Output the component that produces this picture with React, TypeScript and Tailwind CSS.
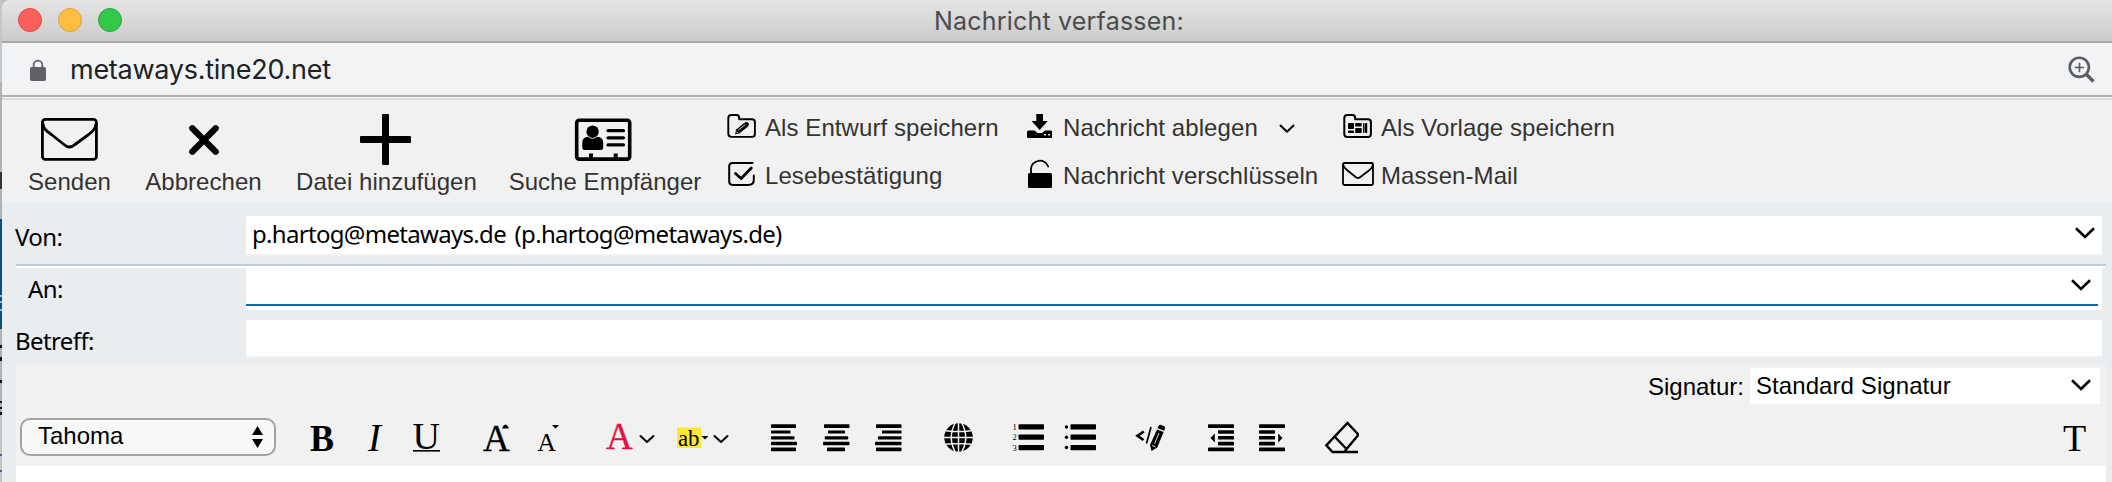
import React from "react";

type ArtProps = { x: number; y: number; w: number; h: number; children: React.ReactNode };

/* Every drawing uses window coordinates inside its own cell. */
function Art({ x, y, w, h, children }: ArtProps) {
  return (
    <svg width={w} height={h} viewBox={`${x} ${y} ${w} ${h}`} className="block shrink-0" aria-hidden="true">
      {children}
    </svg>
  );
}

const stroke = { fill: "none", stroke: "#000", strokeLinecap: "round", strokeLinejoin: "round" } as const;

function Bars({ rows }: { rows: number[][] }) {
  return (
    <>
      {rows.map(([x, y, w, h]) => (
        <rect key={`${x}-${y}`} x={x} y={y} width={w} height={h} rx={0.7} />
      ))}
    </>
  );
}

function BigButton({ label, className, children }: { label: string; className: string; children: React.ReactNode }) {
  return (
    <div className={`flex shrink-0 flex-col items-center ${className}`}>
      {children}
      <span className="mr-px text-[24px] leading-[28px] tracking-[0.04px] whitespace-nowrap">{label}</span>
    </div>
  );
}

function SmallButton({ label, children, after }: { label: string; children: React.ReactNode; after?: React.ReactNode }) {
  return (
    <div className="flex h-12 items-center">
      {children}
      <span className="text-[24px] leading-[28px] tracking-[0.08px] whitespace-nowrap">{label}</span>
      {after}
    </div>
  );
}

function Chevron({ className }: { className: string }) {
  return (
    <svg width="20" height="12" viewBox="0 0 20 12" className={`block shrink-0 ${className}`}>
      <path d="M1 1.3L10 10L19 1.3" fill="none" stroke="#000" strokeWidth="2.6" />
    </svg>
  );
}

const edge: [string, string][] = [
  ["h-[82px]", "bg-[#c3c7cb]"],
  ["h-[91px]", "bg-[#b2b2b2]"],
  ["h-[17px]", "bg-[#333333]"],
  ["h-[30px]", "bg-[#b2b2b2]"],
  ["h-[76px]", "bg-[#064f8c]"],
  ["h-[2px]", "bg-[#9db9d0]"],
  ["h-[4px]", "bg-[#064f8c]"],
  ["h-[2px]", "bg-[#9db9d0]"],
  ["h-[6px]", "bg-[#064f8c]"],
  ["h-[2px]", "bg-[#9db9d0]"],
  ["h-[18px]", "bg-[#064f8c]"],
  ["h-[16px]", "bg-[#b2b2b2]"],
  ["h-[3px]", "bg-[#111111]"],
  ["h-[10px]", "bg-[#b2b2b2]"],
  ["h-[4px]", "bg-[#111111]"],
  ["h-[19px]", "bg-[#b2b2b2]"],
  ["h-[3px]", "bg-[#111111]"],
  ["h-[18px]", "bg-[#b2b2b2]"],
  ["h-[2px]", "bg-[#111111]"],
  ["h-[4px]", "bg-[#b2b2b2]"],
  ["h-[2px]", "bg-[#111111]"],
  ["h-[3px]", "bg-[#b2b2b2]"],
  ["h-[3px]", "bg-[#111111]"],
  ["h-[39px]", "bg-[#c4c4c4]"],
  ["h-[2px]", "bg-[#3f6493]"],
  ["h-[14px]", "bg-[#c4c4c4]"],
  ["h-[2px]", "bg-[#3f6493]"],
  ["h-[10px]", "bg-[#c4c4c4]"],
];

function TitleBar() {
  return (
    <div className="flex h-[43px] items-start rounded-tl-[7px] border-b-2 border-[#a8a8a8] bg-linear-to-b from-[#e5e5e5] to-[#cbcbcb]">
      <div className="flex w-[932px] gap-4 pt-2 pl-4">
        <span className="size-6 rounded-full border border-[#e2463f] bg-[#fc605b]" />
        <span className="size-6 rounded-full border border-[#dfa033] bg-[#fdbe41]" />
        <span className="size-6 rounded-full border border-[#27aa35] bg-[#34c84a]" />
      </div>
      <span className="font-[Inter,sans-serif] text-[25px] leading-[42px] tracking-[0.2px] whitespace-nowrap text-[#4c4c4c]">
        Nachricht verfassen:
      </span>
    </div>
  );
}

function AddressBar() {
  return (
    <div className="flex h-[57px] flex-col">
      <div className="flex h-[52px] items-center justify-between bg-[#f1f3f5]">
        <div className="flex items-center">
          <Art x={2} y={43} w={68} h={52}>
            <rect x="30" y="67" width="16" height="14" rx="1.8" fill="#5f6164" />
            <path d="M33.7 68V65a4.3 4.3 0 0 1 8.6 0V68" fill="none" stroke="#5f6164" strokeWidth="1.8" />
          </Art>
          <span className="pt-[2px] font-[Inter,sans-serif] text-[27px] leading-[50px] tracking-[-0.26px] whitespace-nowrap text-[#202124]">
            metaways.tine20.net
          </span>
        </div>
        <Art x={2060} y={43} w={52} h={52}>
          <circle cx="2079.3" cy="67.3" r="9.6" fill="none" stroke="#5a5c5f" strokeWidth="2.6" />
          <path d="M2086.5 74.5L2093.5 81.5" stroke="#5a5c5f" strokeWidth="3.4" />
          <path d="M2074.8 67.5H2084.2M2079.5 62.8V72.2" stroke="#5a5c5f" strokeWidth="1.7" />
        </Art>
      </div>
      <div className="h-[2px] bg-[#b0b2b4]" />
      <div className="h-px bg-[#f3f3f5]" />
      <div className="h-[2px] bg-[#dadbe0]" />
    </div>
  );
}

function ActionBar() {
  return (
    <div className="flex h-[102px] bg-[#f1f1f1] pl-[20px] text-[#333333]">
      <BigButton label="Senden" className="w-[96px]">
        <Art x={22} y={100} w={96} h={68}>
          <g {...stroke} strokeWidth="2.8">
            <rect x="42.4" y="119.4" width="54" height="40" rx="3" />
            <path d="M43 124C43.5 129 47 131.5 52 135L64 144.5Q69.4 149.5 75 144.5L88 135C92.500 131.500 95.500 129 96 124" />
          </g>
        </Art>
      </BigButton>
      <BigButton label="Abbrechen" className="w-[172px]">
        <Art x={118} y={100} w={172} h={68}>
          <path d="M192.300 128.300L215.700 151.700M215.700 128.300L192.300 151.700" {...stroke} strokeWidth="6.200" />
        </Art>
      </BigButton>
      <BigButton label="Datei hinzufügen" className="w-[194px]">
        <Art x={290} y={100} w={194} h={68}>
          <rect x="382" y="114" width="7" height="51" rx="1" />
          <rect x="360" y="136" width="51" height="7" rx="1" />
        </Art>
      </BigButton>
      <BigButton label="Suche Empfänger" className="w-[243px]">
        <Art x={484} y={100} w={243} h={68}>
          <rect x="576.700" y="120.300" width="53" height="38.800" rx="2.500" {...stroke} strokeWidth="3.600" />
          <circle cx="592.600" cy="131.700" r="6.200" />
          <path d="M582.300 148V143Q582.300 137 588 136.800Q592.600 140.500 597.200 136.800Q603.200 137 603.200 143V148Q603 150 601 150H584.500Q582.500 150 582.300 148Z" />
          <path d="M608 130.700H623.500M608 137.800H623.500M608 144.900H623.500" {...stroke} strokeWidth="3.200" />
          <rect x="589" y="153.500" width="4" height="5" />
          <rect x="613.700" y="153.500" width="4" height="5" />
        </Art>
      </BigButton>
      <div className="flex w-[297px] shrink-0 flex-col pt-1">
        <SmallButton label="Als Entwurf speichern">
          <Art x={727} y={104} w={38} h={48}>
            <path d="M728.300 133.500V118Q728.300 115 731.300 115H736.500Q739.200 115 739.200 118V119.300H752Q754.900 119.300 754.900 122V134Q754.900 136.900 752 136.900H731.500Q728.300 136.900 728.300 133.500Z" {...stroke} strokeWidth="1.900" />
            <path d="M735 134.500L736.200 129.500L744.500 122.800Q747.300 121 748.800 123.500Q749.500 125.300 747.800 126.800L739.500 133.300Z" />
            <path d="M738.300 130.200L745.200 124.600M736.500 131.600L737.800 133" stroke="#f1f1f1" strokeWidth="0.900" />
          </Art>
        </SmallButton>
        <SmallButton label="Lesebestätigung">
          <Art x={727} y={152} w={38} h={48}>
            <path d="M752.500 162.900H732.500Q729.200 162.900 729.200 166.200V181.500Q729.200 184.900 732.500 184.900H748Q753.800 184.900 753.800 180V175.500" {...stroke} strokeWidth="2" />
            <path d="M735.500 173.500L741.200 178.500L751.300 168" {...stroke} strokeWidth="2.800" />
          </Art>
        </SmallButton>
      </div>
      <div className="flex w-[318px] shrink-0 flex-col pt-1">
        <SmallButton
          label="Nachricht ablegen"
          after={
            <svg width="16" height="10" viewBox="0 0 16 10" className="mt-0.5 ml-[21px] block">
              <path d="M1.500 1.500L8 7.800L14.500 1.500" {...stroke} strokeWidth="2" />
            </svg>
          }
        >
          <Art x={1024} y={104} w={39} h={48}>
            <path d="M1036.300 114H1043V121H1047.800L1039.700 130L1031.600 121H1036.300Z" />
            <path d="M1028.500 130.500H1034.500L1037.500 133H1042L1045 130.500H1051Q1052 130.500 1052 132V137Q1052 138 1051 138H1028Q1027 138 1027 137V132Q1027 130.500 1028.500 130.500Z" />
            <path d="M1044.200 134.700H1046M1048.200 134.700H1050" stroke="#f1f1f1" strokeWidth="1.600" />
          </Art>
        </SmallButton>
        <SmallButton label="Nachricht verschlüsseln">
          <Art x={1024} y={152} w={39} h={48}>
            <rect x="1028" y="173" width="24" height="15" rx="1.500" />
            <path d="M1031 174V168.500A8.800 8.200 0 0 1 1048.200 166.500" {...stroke} strokeWidth="1.800" />
          </Art>
        </SmallButton>
      </div>
      <div className="flex shrink-0 flex-col pt-1">
        <SmallButton label="Als Vorlage speichern">
          <Art x={1342} y={104} w={39} h={48}>
            <path d="M1344.300 134V118Q1344.300 115 1347.300 115H1352.500Q1355.200 115 1355.200 118V119.300H1368Q1370.900 119.300 1370.900 122V134Q1370.900 136.900 1368 136.900H1347.300Q1344.300 136.900 1344.300 134Z" {...stroke} strokeWidth="2" />
            <Bars rows={[[1348, 123, 6, 6], [1355.2, 123, 6.5, 3.500], [1348, 130.500, 6, 2.500], [1355.2, 128, 6.500, 5], [1363, 123, 1.500, 10], [1365, 123, 2.200, 10]]} />
          </Art>
        </SmallButton>
        <SmallButton label="Massen-Mail">
          <Art x={1342} y={152} w={39} h={48}>
            <g {...stroke} strokeWidth="1.800">
              <rect x="1343" y="163" width="30" height="22" rx="1.500" />
              <path d="M1343.300 165Q1344 168 1347 170L1355 176.500Q1358 179.500 1361 176.500L1369.500 170Q1372.500 168 1372.800 165" />
            </g>
          </Art>
        </SmallButton>
      </div>
    </div>
  );
}

const label = "shrink-0 font-['Noto_Sans',sans-serif] text-[24px] leading-[32px] tracking-[-0.6px] whitespace-nowrap";

function AddressForm() {
  return (
    <div className="flex h-[162px] flex-col bg-[#e9edf0] pl-[14px] text-black">
      <div className="flex h-[62px] items-start pt-[14px] pr-[10px]">
        <label className={`${label} -ml-px w-[231px] pt-[5px]`}>Von:</label>
        <div className="flex h-[40px] flex-1 items-start justify-between border-b-2 border-[#f0f1f2] bg-white pr-[7px] pl-[6px]">
          <span className="pt-[2px] font-['Noto_Sans',sans-serif] text-[24px] leading-[32px] tracking-[-0.69px] whitespace-nowrap [word-spacing:3px]">
            p.hartog@metaways.de (p.hartog@metaways.de)
          </span>
          <Chevron className="mt-[11px]" />
        </div>
      </div>
      <div className="mr-[6px] h-[2px] bg-[#c0cdd9]" />
      <div className="mr-[7px] ml-px flex h-[44px] border-t-2 border-white pr-[3px]">
        <label className={`${label} w-[229px] border-l-2 border-[#eceeef] pt-[5px] pl-[9px]`}>An:</label>
        <div className="flex h-[42px] flex-1 flex-col bg-white">
          <div className="mr-1 flex h-[38px] justify-end border-b-2 border-[#0f68a6] pr-[7px]">
            <Chevron className="mt-[11px]" />
          </div>
        </div>
      </div>
      <div className="flex h-[54px] items-start pt-[10px] pr-[10px]">
        <label className={`${label} -ml-px w-[231px] pt-[5px]`}>Betreff:</label>
        <div className="h-[38px] flex-1 border-b-2 border-[#f0f1f2] bg-white" />
      </div>
    </div>
  );
}

const serif = "Liberation Serif, serif";

function EditorBar() {
  return (
    <div className="flex h-[62px] items-start justify-between pl-1">
      <div className="flex items-start">
        <div className="mt-[14px] flex h-[38px] w-[256px] items-center justify-between rounded-[10px] border-2 border-[#a3a3a3] bg-[#f8f8f8] pr-[11px] pl-4">
          <span className="-mt-0.5 text-[24px] leading-[28px]">Tahoma</span>
          <svg width="11" height="22" viewBox="0 0 11 22">
            <path d="M0 9L5.500 0L11 9ZM0 13H11L5.500 22Z" />
          </svg>
        </div>
        <Art x={276} y={404} w={74} h={62}>
          <text x="310" y="451" fontFamily={serif} fontSize="38" fontWeight="700" textLength="24" lengthAdjust="spacingAndGlyphs">B</text>
        </Art>
        <Art x={350} y={404} w={50} h={62}>
          <text x="368" y="451" fontFamily={serif} fontSize="39" fontStyle="italic">I</text>
        </Art>
        <Art x={400} y={404} w={70} h={62}>
          <text x="412.500" y="448.500" fontFamily={serif} fontSize="38">U</text>
          <rect x="413" y="450" width="27" height="1.600" />
        </Art>
        <Art x={470} y={404} w={55} h={62}>
          <text x="483" y="451" fontFamily={serif} fontSize="37" stroke="#000" strokeWidth="0.300">A</text>
          <path d="M502 428.500Q503 425 505.500 424.500Q508 425 508.800 428.500Z" />
        </Art>
        <Art x={525} y={404} w={65} h={62}>
          <text x="537.300" y="451" fontFamily={serif} fontSize="26">A</text>
          <path d="M552 425H559L555.500 428.800Z" />
        </Art>
        <Art x={590} y={404} w={75} h={62}>
          <text x="606" y="449" fontFamily={serif} fontSize="37" fill="#e5103f" stroke="#e5103f" strokeWidth="0.300">A</text>
          <path d="M640.500 436L647 442L653.500 436" {...stroke} strokeWidth="2" />
        </Art>
        <Art x={665} y={404} w={85} h={62}>
          <rect x="677" y="427.500" width="24" height="20.500" fill="#fee631" />
          <text x="678" y="446" fontFamily={serif} fontSize="24" textLength="21.500" lengthAdjust="spacingAndGlyphs">ab</text>
          <path d="M701.500 436H708.500L705 439.500Z" />
          <path d="M714.500 436L721 442L727.500 436" {...stroke} strokeWidth="2" />
        </Art>
        <Art x={750} y={404} w={60} h={62}>
          <Bars rows={[[771, 424.3, 25, 3.700], [771, 430.400, 19.500, 3.200], [771, 436.200, 23.500, 3.200], [771, 441.800, 26, 3.400], [771, 447.500, 25, 3.700]]} />
        </Art>
        <Art x={810} y={404} w={53} h={62}>
          <Bars rows={[[824, 424.3, 25.500, 3.700], [828, 430.400, 17, 3.200], [824.700, 436.200, 23.500, 3.200], [823, 441.800, 26.500, 3.400], [827, 447.500, 18, 3.700]]} />
        </Art>
        <Art x={863} y={404} w={67} h={62}>
          <Bars rows={[[876, 424.3, 25.500, 3.700], [882, 430.400, 19.500, 3.200], [878, 436.200, 23.500, 3.200], [875, 441.800, 26.500, 3.400], [876, 447.500, 25.500, 3.700]]} />
        </Art>
        <Art x={930} y={404} w={70} h={62}>
          <circle cx="958.500" cy="437.500" r="14.300" />
          <g fill="none" stroke="#f1f1f1" strokeWidth="1.500">
            <path d="M958.500 422V453M943 437.500H974M946 430.700Q958.500 432.500 971 430.700M946 444.300Q958.500 442.500 971 444.300" />
            <path d="M955.500 422.500Q947 437.500 955.500 452.500M961.500 422.500Q970 437.500 961.500 452.500" />
          </g>
        </Art>
        <Art x={1000} y={404} w={54} h={62}>
          <Bars rows={[[1018.500, 424.300, 25.500, 5.200], [1018.500, 434.600, 25.500, 5.200], [1018.500, 445, 25.500, 5.200]]} />
          <g fontFamily={serif} fontSize="8.500">
            <text x="1012.500" y="429.500">1</text>
            <text x="1012.500" y="440">2</text>
            <text x="1012.500" y="450.500">3</text>
          </g>
        </Art>
        <Art x={1054} y={404} w={66} h={62}>
          <Bars rows={[[1070.500, 424.300, 25.500, 5.200], [1070.500, 434.600, 25.500, 5.200], [1070.500, 445, 25.500, 5.200]]} />
          <circle cx="1066.500" cy="427" r="1.700" />
          <circle cx="1066.500" cy="437.200" r="1.700" />
          <circle cx="1066.500" cy="447.500" r="1.700" />
        </Art>
        <Art x={1120} y={404} w={73} h={62}>
          <path d="M1143.800 431.500L1137.500 435.700L1143.500 440" fill="none" stroke="#000" strokeWidth="2.600" />
          <path d="M1151 427L1146.500 443.500" stroke="#000" strokeWidth="1.700" />
          <path d="M1158.300 426.500Q1159 424.300 1161.200 425L1163.700 426Q1165.600 427 1164.900 429L1164.200 430.700L1157.600 428.200Z" />
          <path d="M1157 429.500L1163.600 432L1157.300 447.500L1151.500 451L1150 445Z" />
          <path d="M1159 433L1154.600 443.800M1152 445.500L1155.400 446.800" stroke="#f1f1f1" strokeWidth="0.900" />
        </Art>
        <Art x={1193} y={404} w={54} h={62}>
          <Bars rows={[[1208, 424.300, 26, 3.700], [1218, 430.200, 16, 3.600], [1218, 436, 16, 3.600], [1218, 441.800, 16, 3.600], [1208, 447.500, 26, 3.700]]} />
          <path d="M1214.800 433.500V442.500L1210.500 438Z" />
        </Art>
        <Art x={1247} y={404} w={63} h={62}>
          <Bars rows={[[1259, 424.300, 26, 3.700], [1259, 430.200, 16, 3.600], [1259, 436, 16, 3.600], [1259, 441.800, 16, 3.600], [1259, 447.500, 26, 3.700]]} />
          <path d="M1278.200 433.500V442.500L1282.500 438Z" />
        </Art>
        <Art x={1310} y={404} w={60} h={62}>
          <g fill="none" stroke="#000" strokeWidth="2.400">
            <path d="M1358 452H1332.500L1326.300 445.300L1347.500 423L1357.800 434V435.500L1344.500 451.500" />
            <path d="M1334.500 436.500L1347 449.500" />
          </g>
        </Art>
      </div>
      <Art x={2050} y={404} w={56} h={62}>
        <text x="2063" y="451" fontFamily={serif} fontSize="38">T</text>
      </Art>
    </div>
  );
}

function Editor() {
  return (
    <div className="flex flex-1 bg-[#e9edf0] pr-[6px] pl-[14px] text-black">
      <div className="flex flex-1 flex-col bg-white">
        <div className="h-[102px] bg-[#f1f1f1]">
          <div className="flex h-[40px] items-start justify-end pt-1 pr-[6px]">
            <span className="mr-[6px] pt-[5px] text-[24px] leading-[28px] whitespace-nowrap">Signatur:</span>
            <div className="flex h-[36px] w-[350px] items-start justify-between bg-white pr-[9px] pl-[6px]">
              <span className="pt-[4px] text-[24px] leading-[28px] tracking-[0.08px] whitespace-nowrap">Standard Signatur</span>
              <Chevron className="mt-[11px]" />
            </div>
          </div>
          <EditorBar />
        </div>
      </div>
    </div>
  );
}

export default function App() {
  return (
    <div className="flex h-[482px] w-[2112px] overflow-hidden bg-[#b9bdc1] font-['Liberation_Sans',Arial,sans-serif]">
      <div className="flex w-[2px] shrink-0 flex-col">
        {edge.map(([h, c], i) => (
          <div key={i} className={`${h} ${c}`} />
        ))}
      </div>
      <div className="flex flex-1 flex-col">
        <TitleBar />
        <AddressBar />
        <ActionBar />
        <AddressForm />
        <Editor />
      </div>
    </div>
  );
}
